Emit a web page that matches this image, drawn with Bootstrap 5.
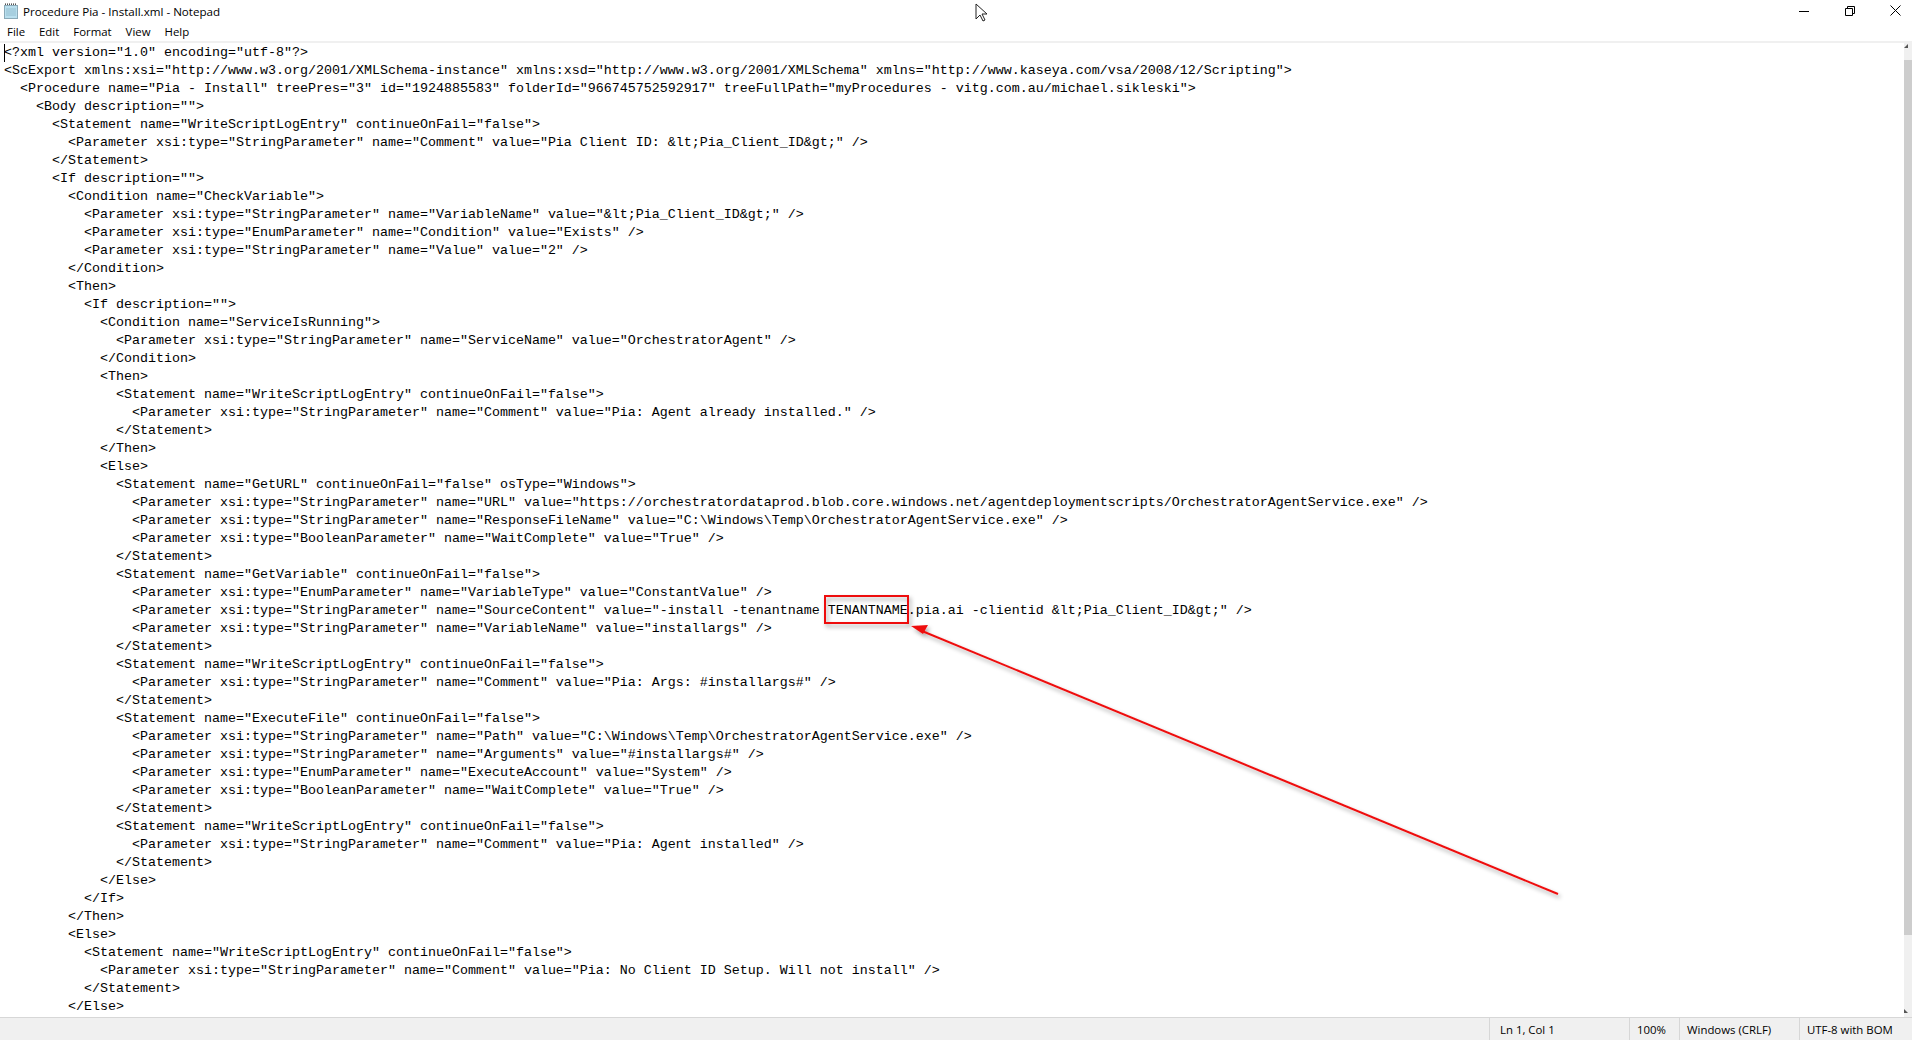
<!DOCTYPE html>
<html lang="en">
<head>
<meta charset="utf-8">
<title>Procedure Pia - Install.xml - Notepad</title>
<link href="https://cdn.jsdelivr.net/npm/bootstrap@5.3.0/dist/css/bootstrap.min.css" rel="stylesheet">
<style>
html,body{height:1040px;overflow:hidden;background:#fff}
.np-win{height:1040px;overflow:hidden;font-family:"Open Sans","Noto Sans","Liberation Sans",sans-serif;font-size:11.6px;color:#000;position:relative}
.np-title{height:21px;padding-left:3px}
.np-title-text{margin-left:4px;font-size:11.6px;line-height:21px;padding-top:2px}
.np-controls{height:21px;margin-right:-6px}
.np-ctl{width:45.5px;display:flex;justify-content:center;align-items:center;height:21px}
.np-menu{height:20px;padding-left:7px;gap:14px;line-height:22px;font-size:11.4px;border-bottom:2px solid #f0f0f0;box-sizing:content-box}
.np-body{height:974px;overflow:hidden}
.np-text{margin:0;padding:1px 0 0 4px;font-family:"Liberation Mono","DejaVu Sans Mono",monospace;font-size:13.33px;line-height:18px;color:#000;overflow:hidden;white-space:pre;flex:1 1 auto}
.np-caret{position:absolute;left:4px;top:44px;width:1px;height:18px;background:#000}
.np-scroll{width:8px;background:#f0f0f0;flex:0 0 8px}
.np-thumb{height:875px;background:#cdcdcd;margin-top:17px}
.np-status{height:23px;background:#f0f0f0;border-top:1px solid #d7d7d7;font-size:11.4px;line-height:24px;box-sizing:border-box}
.np-cell{border-left:1px solid #d7d7d7;height:22px;white-space:nowrap}
.np-c1{width:140px;padding-left:10px}
.np-c2{width:50px;padding-left:7px}
.np-c3{width:120px;padding-left:7px}
.np-c4{width:113px;padding-left:7px}
.np-over{position:absolute;left:0;top:0;pointer-events:none}
</style>
</head>
<body>
<div class="np-win d-flex flex-column">
  <div class="np-title d-flex align-items-center justify-content-between">
    <div class="d-flex align-items-center">
      <svg width="16" height="17" viewBox="0 0 16 17"><rect x="1.5" y="3.5" width="13" height="13" fill="#b9dfee" stroke="#8aa9b8"/><path d="M3 7h10M3 9h10M3 11h10M3 13h10" stroke="#94bed0"/><path d="M2 2.5h12" stroke="#555" stroke-dasharray="1 1"/><path d="M2 1.5h12" stroke="#999" stroke-dasharray="1 1"/></svg>
      <span class="np-title-text">Procedure Pia - Install.xml - Notepad</span>
    </div>
    <div class="np-controls d-flex">
      <div class="np-ctl"><svg width="10" height="10" viewBox="0 0 10 10"><path d="M0 5.5h10" stroke="#000"/></svg></div>
      <div class="np-ctl"><svg width="10" height="10" viewBox="0 0 10 10"><path d="M.5 2.5h7v7h-7zM2.5 2.5v-2h7v7h-2" fill="none" stroke="#000"/></svg></div>
      <div class="np-ctl"><svg width="11" height="11" viewBox="0 0 11 11"><path d="M.5.5l10 10M10.5.5l-10 10" stroke="#000"/></svg></div>
    </div>
  </div>
  <div class="np-menu d-flex"><span>File</span><span>Edit</span><span>Format</span><span>View</span><span>Help</span></div>
  <div class="np-body d-flex flex-grow-1">
<pre class="np-text">&lt;?xml version="1.0" encoding="utf-8"?&gt;
&lt;ScExport xmlns:xsi="http://www.w3.org/2001/XMLSchema-instance" xmlns:xsd="http://www.w3.org/2001/XMLSchema" xmlns="http://www.kaseya.com/vsa/2008/12/Scripting"&gt;
  &lt;Procedure name="Pia - Install" treePres="3" id="1924885583" folderId="966745752592917" treeFullPath="myProcedures - vitg.com.au/michael.sikleski"&gt;
    &lt;Body description=""&gt;
      &lt;Statement name="WriteScriptLogEntry" continueOnFail="false"&gt;
        &lt;Parameter xsi:type="StringParameter" name="Comment" value="Pia Client ID: &amp;lt;Pia_Client_ID&amp;gt;" /&gt;
      &lt;/Statement&gt;
      &lt;If description=""&gt;
        &lt;Condition name="CheckVariable"&gt;
          &lt;Parameter xsi:type="StringParameter" name="VariableName" value="&amp;lt;Pia_Client_ID&amp;gt;" /&gt;
          &lt;Parameter xsi:type="EnumParameter" name="Condition" value="Exists" /&gt;
          &lt;Parameter xsi:type="StringParameter" name="Value" value="2" /&gt;
        &lt;/Condition&gt;
        &lt;Then&gt;
          &lt;If description=""&gt;
            &lt;Condition name="ServiceIsRunning"&gt;
              &lt;Parameter xsi:type="StringParameter" name="ServiceName" value="OrchestratorAgent" /&gt;
            &lt;/Condition&gt;
            &lt;Then&gt;
              &lt;Statement name="WriteScriptLogEntry" continueOnFail="false"&gt;
                &lt;Parameter xsi:type="StringParameter" name="Comment" value="Pia: Agent already installed." /&gt;
              &lt;/Statement&gt;
            &lt;/Then&gt;
            &lt;Else&gt;
              &lt;Statement name="GetURL" continueOnFail="false" osType="Windows"&gt;
                &lt;Parameter xsi:type="StringParameter" name="URL" value="https://orchestratordataprod.blob.core.windows.net/agentdeploymentscripts/OrchestratorAgentService.exe" /&gt;
                &lt;Parameter xsi:type="StringParameter" name="ResponseFileName" value="C:\Windows\Temp\OrchestratorAgentService.exe" /&gt;
                &lt;Parameter xsi:type="BooleanParameter" name="WaitComplete" value="True" /&gt;
              &lt;/Statement&gt;
              &lt;Statement name="GetVariable" continueOnFail="false"&gt;
                &lt;Parameter xsi:type="EnumParameter" name="VariableType" value="ConstantValue" /&gt;
                &lt;Parameter xsi:type="StringParameter" name="SourceContent" value="-install -tenantname TENANTNAME.pia.ai -clientid &amp;lt;Pia_Client_ID&amp;gt;" /&gt;
                &lt;Parameter xsi:type="StringParameter" name="VariableName" value="installargs" /&gt;
              &lt;/Statement&gt;
              &lt;Statement name="WriteScriptLogEntry" continueOnFail="false"&gt;
                &lt;Parameter xsi:type="StringParameter" name="Comment" value="Pia: Args: #installargs#" /&gt;
              &lt;/Statement&gt;
              &lt;Statement name="ExecuteFile" continueOnFail="false"&gt;
                &lt;Parameter xsi:type="StringParameter" name="Path" value="C:\Windows\Temp\OrchestratorAgentService.exe" /&gt;
                &lt;Parameter xsi:type="StringParameter" name="Arguments" value="#installargs#" /&gt;
                &lt;Parameter xsi:type="EnumParameter" name="ExecuteAccount" value="System" /&gt;
                &lt;Parameter xsi:type="BooleanParameter" name="WaitComplete" value="True" /&gt;
              &lt;/Statement&gt;
              &lt;Statement name="WriteScriptLogEntry" continueOnFail="false"&gt;
                &lt;Parameter xsi:type="StringParameter" name="Comment" value="Pia: Agent installed" /&gt;
              &lt;/Statement&gt;
            &lt;/Else&gt;
          &lt;/If&gt;
        &lt;/Then&gt;
        &lt;Else&gt;
          &lt;Statement name="WriteScriptLogEntry" continueOnFail="false"&gt;
            &lt;Parameter xsi:type="StringParameter" name="Comment" value="Pia: No Client ID Setup. Will not install" /&gt;
          &lt;/Statement&gt;
        &lt;/Else&gt;</pre>
    <div class="np-scroll"><div class="np-thumb"></div></div>
  </div>
  <div class="np-status d-flex justify-content-end">
    <div class="np-cell np-c1">Ln 1, Col 1</div>
    <div class="np-cell np-c2">100%</div>
    <div class="np-cell np-c3">Windows (CRLF)</div>
    <div class="np-cell np-c4">UTF-8 with BOM</div>
  </div>
  <div class="np-caret"></div>
  <svg class="np-over" width="1912" height="1040" viewBox="0 0 1912 1040">
    <defs><filter id="shd" x="-10%" y="-10%" width="120%" height="130%"><feDropShadow dx="2" dy="3" stdDeviation="2" flood-color="#000" flood-opacity=".35"/></filter></defs>
    <g filter="url(#shd)">
      <rect x="825" y="596" width="83" height="27" fill="none" stroke="#ee1111" stroke-width="2"/>
      <path d="M1558 894L922 631" stroke="#ee1111" stroke-width="2" fill="none"/>
      <path d="M911 626l17-1-5 9z" fill="#ee1111"/>
    </g>
    <path d="M976 4v15l4-4 3 6 2-1-3-6h5z" fill="#fff" stroke="#222"/>
    <path d="M1908 44l-4 4h4z" fill="#555"/>
    <path d="M1908 1013l-4-4v4z" fill="#555"/>
  </svg>
</div>
<script src="https://cdn.jsdelivr.net/npm/bootstrap@5.3.0/dist/js/bootstrap.bundle.min.js"></script>
</body>
</html>
